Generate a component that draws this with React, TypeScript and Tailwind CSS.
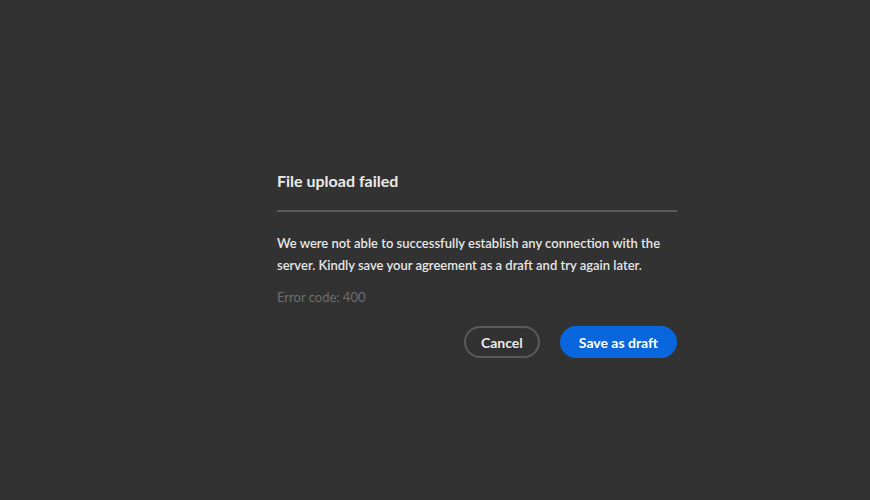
export default function App() {
  return (
    <div className="w-full h-[500px] bg-[#323232] flex font-['Lato',sans-serif]">
      <div className="w-[400px] ml-[277px] mt-[169px] flex flex-col">
        <h2 className="text-[16px] leading-[24px] font-bold text-[#eaeaea]">File upload failed</h2>
        <div className="h-[2px] bg-[#5a5a5a] mt-[17px]" />
        <p className="mt-[20px] text-[13px] leading-[22px] text-[#e6e6e6] font-semibold">
          We were not able to successfully establish any connection with the server. Kindly save your agreement as a draft and try again later.
        </p>
        <p className="mt-[10px] text-[13px] leading-[22px] text-[#6e6e6e]">Error code: 400</p>
        <div className="mt-[18px] flex justify-end gap-[20px]">
          <button className="h-[32px] px-[15px] rounded-full border-2 border-[#5a5a5a] text-[14px] font-bold text-[#eaeaea]">
            Cancel
          </button>
          <button className="h-[32px] px-[19px] rounded-full bg-[#0a66dc] text-[14px] font-bold text-white">
            Save as draft
          </button>
        </div>
      </div>
    </div>
  );
}
